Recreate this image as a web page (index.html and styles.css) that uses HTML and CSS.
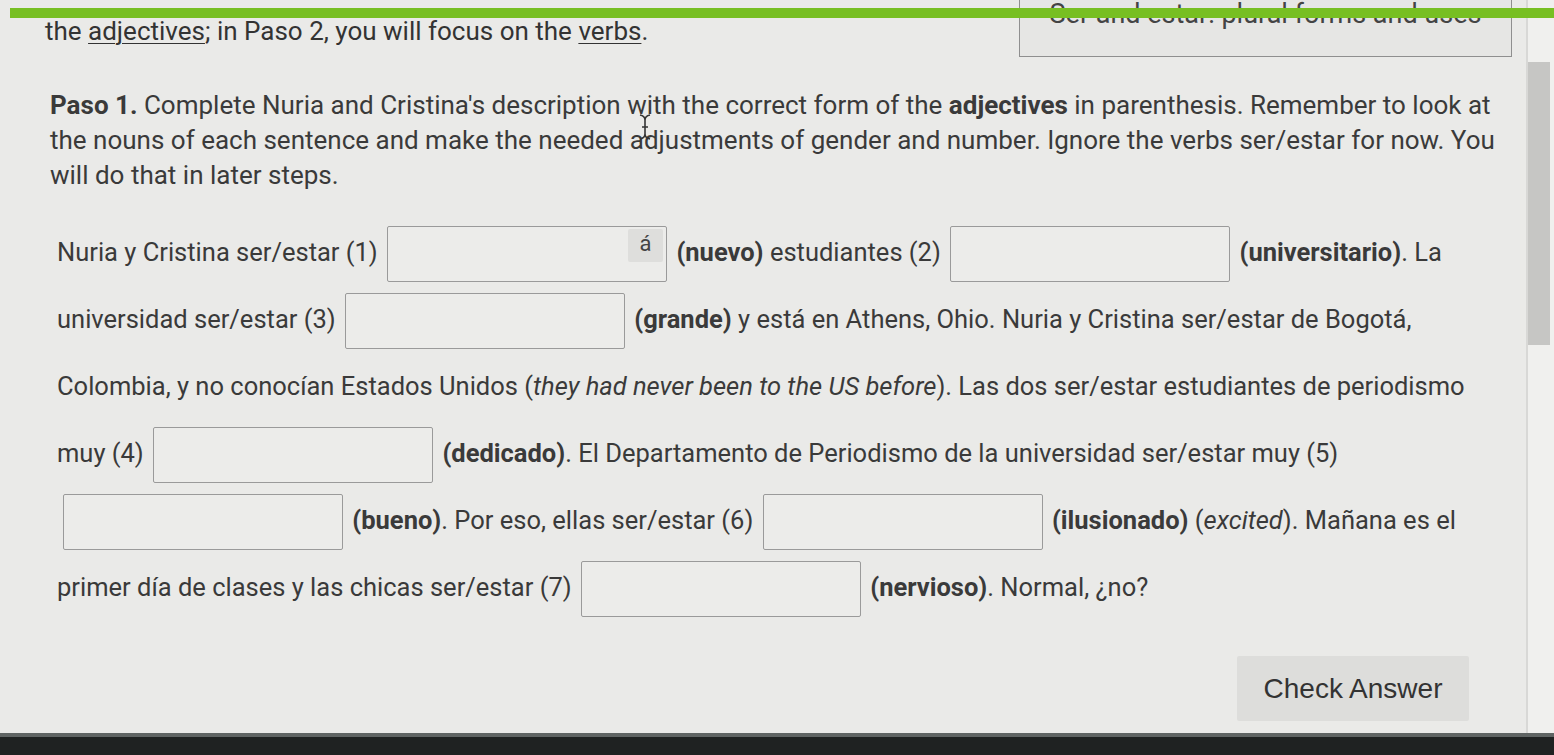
FILE: index.html
```html
<!DOCTYPE html>
<html lang="en">
<head>
<meta charset="utf-8">
<title>Ser and estar</title>
<link rel="stylesheet" href="styles.css">
</head>
<body>
<div class="screen">
  <div class="viewport">
    <main class="content">
      <div class="intro-row">
        <p class="intro">the <span class="u">adjectives</span>; in Paso 2, you will focus on the <span class="u">verbs</span>.</p>
        <div class="topic-box">Ser and estar: plural forms and uses</div>
      </div>

      <p class="instructions"><b>Paso 1.</b> Complete Nuria and Cristina's description with the correct form of the <b>adjectives</b> in parenthesis. Remember to look at the nouns of each sentence and make the needed adjustments of gender and number. Ignore the verbs ser/estar for now. You will do that in later steps.</p>

      <p class="exercise">Nuria y Cristina ser/estar (1) <span class="field"><span class="accent">á</span></span> <b>(nuevo)</b> estudiantes (2) <span class="field"></span> <b>(universitario)</b>. La<br>universidad ser/estar (3) <span class="field"></span> <b>(grande)</b> y está en Athens, Ohio. Nuria y Cristina ser/estar de Bogotá,<br>Colombia, y no conocían Estados Unidos (<i>they had never been to the US before</i>). Las dos ser/estar estudiantes de periodismo<br>muy (4) <span class="field"></span> <b>(dedicado)</b>. El Departamento de Periodismo de la universidad ser/estar muy (5)<br><span class="field first"></span> <b>(bueno)</b>. Por eso, ellas ser/estar (6) <span class="field"></span> <b>(ilusionado)</b> (<i>excited</i>). Mañana es el<br>primer día de clases y las chicas ser/estar (7) <span class="field"></span> <b>(nervioso)</b>. Normal, ¿no?</p>

      <div class="actions">
        <button class="check">Check Answer</button>
      </div>
    </main>
    <aside class="scrollbar"><div class="thumb"></div></aside>
  </div>
  <div class="greenbar"></div>
  <svg class="ibeam" width="14" height="28" viewBox="0 0 14 28"><path d="M2 2 Q7 3 7 7 V21 Q7 25 2 26 M12 2 Q7 3 7 7 M7 21 Q7 25 12 26 M4 14 H10" fill="none" stroke="#333" stroke-width="1.6"/></svg>
  <div class="bezel"></div>
</div>
</body>
</html>
```
FILE: styles.css
```css
html, body {
  margin: 0;
  padding: 0;
}
body {
  background: #e9e9e7;
  font-family: Roboto, "Liberation Sans", Arial, sans-serif;
  color: #3b3b3b;
  overflow: hidden;
}
.screen {
  position: relative;
  width: 1554px;
  height: 755px;
  display: flex;
  flex-direction: column;
  background: #eaeae8;
}
.viewport {
  flex: 1;
  display: flex;
  overflow: hidden;
}
.content {
  flex: 1;
  padding: 0 14px 0 45px;
  overflow: hidden;
}
.intro-row {
  display: flex;
  justify-content: space-between;
  align-items: flex-start;
  margin-top: -12px;
}
.intro {
  margin: 27px 0 0;
  font-size: 26px;
  line-height: 32px;
  color: #333;
}
.u {
  text-decoration: underline;
  text-underline-offset: 3px;
  text-decoration-thickness: 1px;
}
.topic-box {
  width: 493px;
  height: 69px;
  box-sizing: border-box;
  border: 1.5px solid #8f8f8f;
  background: #e6e6e4;
  text-align: center;
  font-size: 27px;
  line-height: 27px;
  padding-top: 12px;
  color: #444;
  white-space: nowrap;
  overflow: hidden;
}
.instructions {
  margin: 31px 0 0 5px;
  font-size: 26px;
  line-height: 35px;
  width: 1460px;
  color: #3a3a3a;
}
.instructions b {
  font-weight: 700;
}
.exercise {
  margin: 26px 0 0 12px;
  font-size: 25.5px;
  line-height: 67px;
  color: #3a3a3a;
  white-space: nowrap;
}
.exercise b {
  font-weight: 700;
}
.field {
  display: inline-block;
  position: relative;
  width: 280px;
  height: 56px;
  box-sizing: border-box;
  border: 1.5px solid #9a9a9a;
  border-radius: 2px;
  background: #ececea;
  vertical-align: middle;
  margin: 0 3px;
}
.field.first {
  margin-left: 6px;
}
.accent {
  position: absolute;
  top: 2px;
  right: 3px;
  width: 35px;
  height: 33px;
  background: #dededc;
  border-radius: 2px;
  font-size: 22px;
  line-height: 30px;
  text-align: center;
  color: #444;
}
.actions {
  display: flex;
  justify-content: flex-end;
  margin-top: 35px;
  padding-right: 43px;
}
.check {
  width: 232px;
  height: 65px;
  border: none;
  border-radius: 2px;
  background: #dddddb;
  font-family: "Liberation Sans", Arial, sans-serif;
  font-size: 28px;
  color: #333;
}
.scrollbar {
  width: 28px;
  border-left: 2px solid #d8d8d6;
  background: #f0f0ee;
  padding-top: 62px;
  box-sizing: border-box;
}
.thumb {
  width: 22px;
  height: 283px;
  background: #c6c6c4;
}
.greenbar {
  position: absolute;
  top: 8px;
  left: 10px;
  right: 0;
  height: 10px;
  background: #77bf22;
}
.ibeam {
  position: absolute;
  left: 638px;
  top: 113px;
}
.bezel {
  height: 22px;
  background: #1f2222;
  border-top: 4px solid #5f6463;
  box-sizing: border-box;
}
```
